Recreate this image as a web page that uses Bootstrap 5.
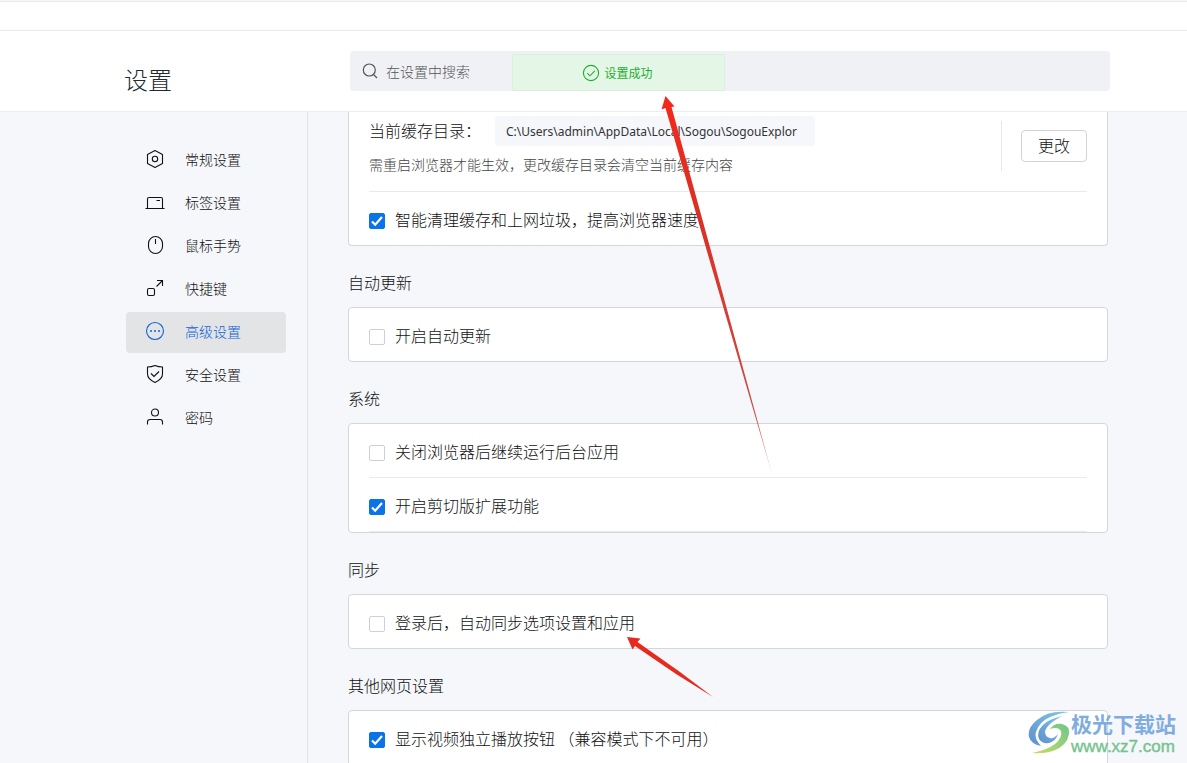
<!DOCTYPE html>
<html lang="zh-CN">
<head>
<meta charset="utf-8">
<meta name="viewport" content="width=device-width, initial-scale=1">
<title>设置</title>
<link href="https://cdn.jsdelivr.net/npm/bootstrap@5.3.0/dist/css/bootstrap.min.css" rel="stylesheet">
<style>
body{font-family:"Noto Sans CJK SC",sans-serif;font-weight:300;font-size:16px;line-height:24px;color:#111;background:#f5f7fb}
.tab-strip{height:30px;border-top:1px solid #ebebeb;border-bottom:1px solid #ebebeb;margin-top:1px}
.top-bar{height:81px;border-bottom:1px solid #ecedf0}
.side-col{flex:0 0 308px;padding-left:126px}
.top-bar .side-col{padding-left:124px}
.main-col{padding-left:40px;padding-right:79px}
.top-bar .main-col{padding-left:42px;padding-right:77px}
.page-title{font-size:24px;line-height:36px;font-weight:300;color:#222931}
.search-box{height:40px;background:#f0f1f5;padding-left:12px;border-radius:4px}
.search-box input{font-size:14px;font-weight:300;color:#444;line-height:20px}
.search-box input::placeholder{color:#555;opacity:1}
.toast-ok{left:162px;top:3px;width:213px;height:37px;background:#e4f7e7;border:1px solid #d8f1dc;border-radius:2px;color:#1fae2f;font-size:12px;font-weight:400;padding-right:2px}
.side-menu{border-right:1px solid #dfe1e6;padding-top:28px;padding-right:21px}
.side-menu a{height:41px;margin-bottom:2px;padding:0 0 3px 19px;gap:20px;font-size:14px;color:#111;text-decoration:none;border-radius:4px}
.side-menu a.current{background:#e2e4e5;color:#0f62dd}
.side-menu svg{width:20px;height:20px;flex:none;fill:none;stroke:currentColor;stroke-width:1.1}
.set-card{background:#fff;border:1px solid #d3d6da;border-radius:4px;padding:0 20px}
.set-card.cut{border-top:0;border-radius:0 0 4px 4px}
.set-row{height:53px;gap:10px}
.set-row label{padding-top:1px}
.rule-b{border-bottom:1px solid #e8e9eb}
.set-card .form-check-input{width:16px;height:16px;margin:5px 0 0;border:1px solid #cdd0d4;border-radius:2px;flex:none}
.set-card .form-check-input:checked{background-color:#0a73ea;border-color:#0a73ea;background-size:16px;background-image:url("data:image/svg+xml,%3csvg xmlns='http://www.w3.org/2000/svg' viewBox='0 0 16 16'%3e%3cpath fill='none' stroke='%23fff' stroke-width='2.2' d='M3 8.500l3.200 3.200L13 4'/%3e%3c/svg%3e")}
.sec-title{font-size:16px;line-height:24px;font-weight:300;margin:0;padding:24px 0 13px}
.cache-row{height:80px}
.path-box{width:320px;height:30px;background:#f5f7fb;border:0;border-radius:4px;padding:0 11px;font-family:"Noto Sans",sans-serif;font-size:12px;font-weight:400;color:#333}
.cache-label{width:126px;padding-bottom:2px}
.note-text{font-size:14px;line-height:20px;color:#444}
.btn-edit{width:66px;height:32px;padding:0 0 2px;font-size:16px;line-height:28px;font-weight:300;color:#111;background:#fff;border:1px solid #d0d3d7;border-radius:4px}
.btn-cell{height:50px;border-left:1px solid #e6e7ea;padding-left:19px;margin-top:9px}
.arrows{left:0;top:0;pointer-events:none}
.site-mark{right:11px;bottom:6px;opacity:.9}
.mark-name{font-size:21px;line-height:28px;font-weight:700;color:#73a5dc}
.mark-url{font-family:"Liberation Sans",sans-serif;font-size:17px;line-height:20px;font-weight:400;color:#68bd84;-webkit-text-stroke:.4px #68bd84}
</style>
</head>
<body>
<div class="vh-100 d-flex flex-column overflow-hidden position-relative">
  <div class="tab-strip bg-white flex-shrink-0"></div>
  <header class="top-bar bg-white d-flex flex-shrink-0">
    <div class="side-col d-flex align-items-center pt-3"><h1 class="page-title mb-0">设置</h1></div>
    <div class="main-col flex-grow-1 d-flex align-items-center">
      <div class="search-box w-100 d-flex align-items-center position-relative">
        <svg width="16" height="16" viewBox="0 0 16 16" fill="none" stroke="#555" stroke-width="1.2" aria-hidden="true"><circle cx="7.300" cy="7" r="6"/><path d="M11.500 11.500l3.500 3.500"/></svg>
        <input class="border-0 bg-transparent flex-grow-1 ps-2" type="text" placeholder="在设置中搜索" aria-label="在设置中搜索">
        <div class="toast-ok position-absolute d-flex align-items-center justify-content-center gap-1" role="status">
          <svg width="18" height="18" viewBox="0 0 18 18" fill="none" stroke="currentColor" stroke-width="1.100" aria-hidden="true"><circle cx="9" cy="9" r="7.600"/><path d="M5.300 9.200l2.600 2.600 5-5"/></svg>
          <span>设置成功</span>
        </div>
      </div>
    </div>
  </header>

  <div class="d-flex flex-grow-1 overflow-hidden">
    <nav class="side-col side-menu">
      <a href="#" class="d-flex align-items-center"><svg viewBox="0 0 20 20"><path d="M10 1.600l7.500 3.800v9.200L10 18.400l-7.500-3.800V5.400z" stroke-linejoin="round"/><circle cx="10" cy="10" r="2.700"/></svg>常规设置</a>
      <a href="#" class="d-flex align-items-center"><svg viewBox="0 0 20 20"><path d="M.5 16.500h19M2.500 16.500V7q0-1.500 1.500-1.500h12q1.500 0 1.500 1.500v9.500M11.500 8.500h3.500"/></svg>标签设置</a>
      <a href="#" class="d-flex align-items-center"><svg viewBox="0 0 20 20"><rect x="3.500" y="1.500" width="14" height="17" rx="7"/><path d="M10.500 4v5"/></svg>鼠标手势</a>
      <a href="#" class="d-flex align-items-center"><svg viewBox="0 0 20 20"><rect x="2.500" y="10.500" width="7" height="7" rx="1.500"/><path d="M11.500 8.500l6-6M12 2.500h5.500V8"/></svg>快捷键</a>
      <a href="#" class="d-flex align-items-center current" aria-current="page"><svg viewBox="0 0 20 20"><circle cx="10" cy="10" r="8.500"/><path d="M5 10h2M9 10h2M13 10h2" stroke-width="1.600"/></svg>高级设置</a>
      <a href="#" class="d-flex align-items-center"><svg viewBox="0 0 20 20"><path d="M2.500 3q4 0 7.500-1.500Q13.500 3 17.500 3v7q0 5-7.500 8.500Q2.500 15 2.500 10z" stroke-linejoin="round"/><path d="M6 9.500l3 3 5-5"/></svg>安全设置</a>
      <a href="#" class="d-flex align-items-center"><svg viewBox="0 0 20 20"><circle cx="10" cy="5.500" r="3.500"/><path d="M2.500 17.500V15q0-2.500 2.500-2.500h10q2.500 0 2.500 2.500v2.500"/></svg>密码</a>
    </nav>

    <main class="main-col flex-grow-1">
      <section class="set-card cut">
        <div class="cache-row rule-b d-flex justify-content-between">
          <div class="pt-1">
            <div class="d-flex align-items-center"><label for="cache" class="cache-label">当前缓存目录：</label><input id="cache" class="path-box" type="text" readonly value="C:\Users\admin\AppData\Local\Sogou\SogouExplor"></div>
            <div class="note-text mt-2">需重启浏览器才能生效，更改缓存目录会清空当前缓存内容</div>
          </div>
          <div class="btn-cell d-flex align-items-center"><button type="button" class="btn btn-edit">更改</button></div>
        </div>
        <div class="set-row d-flex align-items-center"><input class="form-check-input" type="checkbox" id="c1" checked><label for="c1">智能清理缓存和上网垃圾，提高浏览器速度</label></div>
      </section>

      <h2 class="sec-title">自动更新</h2>
      <section class="set-card">
        <div class="set-row d-flex align-items-center"><input class="form-check-input" type="checkbox" id="c2"><label for="c2">开启自动更新</label></div>
      </section>

      <h2 class="sec-title">系统</h2>
      <section class="set-card">
        <div class="rule-b"><div class="set-row d-flex align-items-center"><input class="form-check-input" type="checkbox" id="c3"><label for="c3">关闭浏览器后继续运行后台应用</label></div></div>
        <div class="rule-b"><div class="set-row d-flex align-items-center"><input class="form-check-input" type="checkbox" id="c4" checked><label for="c4">开启剪切版扩展功能</label></div></div>
      </section>

      <h2 class="sec-title">同步</h2>
      <section class="set-card">
        <div class="set-row d-flex align-items-center"><input class="form-check-input" type="checkbox" id="c5"><label for="c5">登录后，自动同步选项设置和应用</label></div>
      </section>

      <h2 class="sec-title">其他网页设置</h2>
      <section class="set-card">
        <div class="rule-b"><div class="set-row d-flex align-items-center"><input class="form-check-input" type="checkbox" id="c6" checked><label for="c6">显示视频独立播放按钮 （兼容模式下不可用）</label></div></div>
      </section>
    </main>
  </div>

  <!-- red pointer arrows laid over the page -->
  <svg class="arrows position-absolute" width="1187" height="763" viewBox="0 0 1187 763" aria-hidden="true">
    <defs>
      <linearGradient id="fade" x1="0" y1="97" x2="0" y2="472" gradientUnits="userSpaceOnUse"><stop offset="0" stop-color="#f5281b"/><stop offset=".3" stop-color="#db3024"/><stop offset=".85" stop-color="#d04a40"/><stop offset="1" stop-color="#d04a40" stop-opacity=".5"/></linearGradient>
    </defs>
    <path fill="url(#fade)" d="M665.500 96L674.500 106.500L671.500 107L713.500 260L772 474L709.500 260L665.500 108L661.500 109.500z"/>
    <path fill="#e52a1f" d="M627 637L640.500 638.500L637.500 642L680 672L713 697L676 674L635 646L632.500 649.500z"/>
  </svg>

  <div class="site-mark position-absolute d-flex align-items-center">
    <svg width="43" height="44" viewBox="0 0 43 44" aria-hidden="true">
      <defs>
        <linearGradient id="mb" x1="0" y1="1" x2="1" y2="0"><stop offset="0" stop-color="#4d83c9"/><stop offset="1" stop-color="#72c3e3"/></linearGradient>
        <linearGradient id="mg" x1="0" y1="1" x2="1" y2="0"><stop offset="0" stop-color="#c3d957"/><stop offset="1" stop-color="#5fc17b"/></linearGradient>
      </defs>
      <path fill="url(#mb)" d="M41 1Q20-1 9 9Q-1 17 1 26Q3 33 13 35Q6 28 8 21Q11 11 22 6Q31 2 41 1z"/>
      <path fill="url(#mb)" d="M34 5Q21 8 15 14Q8 21 11 28Q14 33 21 32Q28 30 30 23Q26 28 22 27Q17 26 17 20Q19 13 34 5z"/>
      <path fill="url(#mg)" d="M22 18Q26 12 34 13Q42 15 41 23Q39 35 25 40Q15 43 4 42Q19 39 27 33Q35 26 33 20Q30 15 22 18z"/>
    </svg>
    <div><div class="mark-name">极光下载站</div><div class="mark-url">www.xz7.com</div></div>
  </div>
</div>
<script src="https://cdn.jsdelivr.net/npm/bootstrap@5.3.0/dist/js/bootstrap.bundle.min.js"></script>
</body>
</html>
